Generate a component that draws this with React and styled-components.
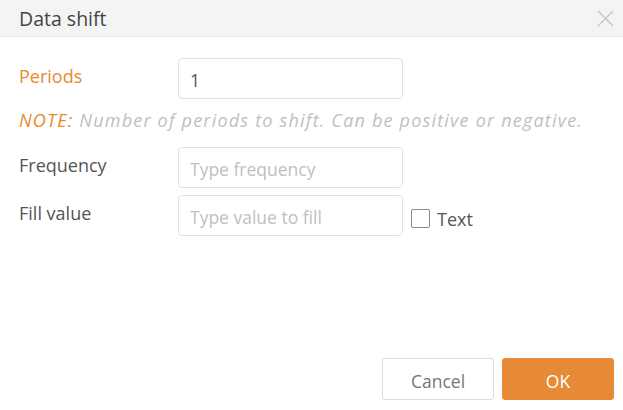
import React, { useState } from 'react';
import styled, { createGlobalStyle } from 'styled-components';

const GlobalStyle = createGlobalStyle`
  html, body {
    margin: 0;
    padding: 0;
    background: #ffffff;
  }
  * {
    box-sizing: border-box;
  }
`;

const Dialog = styled.div`
  width: 623px;
  height: 410px;
  display: flex;
  flex-direction: column;
  background: #ffffff;
  font-family: "Open Sans", "Noto Sans", sans-serif;
  color: #555555;
`;

const Header = styled.div`
  height: 37px;
  display: flex;
  align-items: center;
  justify-content: space-between;
  padding: 0 8px 0 19px;
  background: #f4f4f4;
  border-bottom: 1px solid #e6e6e6;
`;

const Title = styled.h1`
  margin: 0;
  font-size: 19.5px;
  font-weight: 400;
  color: #444444;
`;

const CloseButton = styled.button`
  width: 20px;
  height: 20px;
  padding: 0;
  border: none;
  background: transparent;
  display: flex;
  align-items: center;
  justify-content: center;
  cursor: pointer;
`;

const Body = styled.div`
  flex: 1;
  padding: 21px 19px 0 19px;
  display: flex;
  flex-direction: column;
`;

const Row = styled.div`
  display: flex;
  align-items: center;
  margin-top: ${p => p.$gap || 0}px;
`;

const Label = styled.label`
  width: 159px;
  font-size: 18px;
  color: ${p => (p.$accent ? '#e8892f' : '#555555')};
  margin-top: -6px;
`;

const TextInput = styled.input`
  width: 225px;
  height: 41px;
  padding: 2px 11px 0 11px;
  border: 1px solid #e2e2e2;
  border-radius: 4px;
  font-family: inherit;
  font-size: 17.5px;
  color: #555555;
  outline: none;
  &::placeholder {
    color: #c0c0c0;
  }
`;

const Note = styled.p`
  margin: 10px 0 0 0;
  font-size: 18px;
  line-height: 22px;
  letter-spacing: 1.2px;
  font-style: italic;
  color: #c0c0c0;
  white-space: nowrap;
`;

const NoteTag = styled.span`
  color: #e8892f;
`;

const CheckLabel = styled.label`
  display: flex;
  align-items: center;
  margin-left: 8px;
  margin-top: 6px;
  font-size: 18px;
  color: #555555;
  cursor: pointer;
`;

const Box = styled.span`
  width: 19px;
  height: 19px;
  border: 1px solid #8a8a8a;
  border-radius: 2px;
  margin-right: 7px;
  background: ${p => (p.$on ? '#e8892f' : '#ffffff')};
`;

const Footer = styled.div`
  display: flex;
  justify-content: flex-end;
  gap: 8px;
  padding: 0 9px 10px 0;
`;

const Button = styled.button`
  width: 112px;
  height: 42px;
  padding: 4px 0 0 0;
  border-radius: 3px;
  font-family: inherit;
  font-size: 17.5px;
  cursor: pointer;
  border: 1px solid ${p => (p.$primary ? '#e68a35' : '#dcdcdc')};
  background: ${p => (p.$primary ? '#e68a35' : '#ffffff')};
  color: ${p => (p.$primary ? '#ffffff' : '#777777')};
`;

const App = () => {
  const [periods, setPeriods] = useState('1');
  const [asText, setAsText] = useState(false);

  return (
    <>
      <GlobalStyle />
      <Dialog>
        <Header>
          <Title>Data shift</Title>
          <CloseButton aria-label="Close">
            <svg width="17" height="17" viewBox="0 0 17 17">
              <path d="M1 1 L16 16 M16 1 L1 16" stroke="#c4c4c4" strokeWidth="1.4" fill="none" />
            </svg>
          </CloseButton>
        </Header>
        <Body>
          <Row>
            <Label $accent>Periods</Label>
            <TextInput value={periods} onChange={e => setPeriods(e.target.value)} />
          </Row>
          <Note>
            <NoteTag>NOTE:</NoteTag> Number of periods to shift. Can be positive or negative.
          </Note>
          <Row $gap={16}>
            <Label>Frequency</Label>
            <TextInput placeholder="Type frequency" />
          </Row>
          <Row $gap={7}>
            <Label>Fill value</Label>
            <TextInput placeholder="Type value to fill" />
            <CheckLabel onClick={() => setAsText(!asText)}>
              <Box $on={asText} />
              Text
            </CheckLabel>
          </Row>
        </Body>
        <Footer>
          <Button>Cancel</Button>
          <Button $primary>OK</Button>
        </Footer>
      </Dialog>
    </>
  );
};

export default App;
